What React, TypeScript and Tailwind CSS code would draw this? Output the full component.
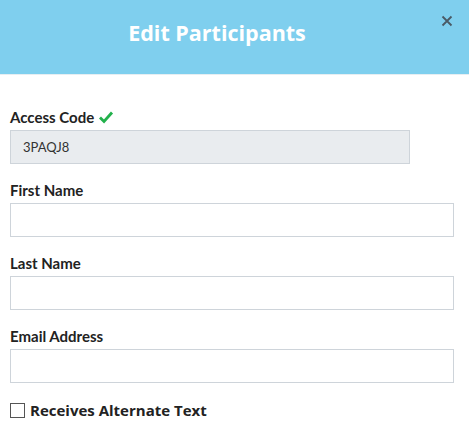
import React from 'react';

const Field = ({ label, value, disabled, check, narrow }: { label: string; value?: string; disabled?: boolean; check?: boolean; narrow?: boolean }) => (
  <div className="mb-[16px]">
    <label className="flex items-center h-[20px] text-[15px] font-bold text-[#222] mb-[3px]">
      {label}
      {check && (
        <svg className="ml-[4px]" width="16" height="14" viewBox="0 0 16 14">
          <path d="M2 7.5 L6 11.5 L14 2.5" fill="none" stroke="#22b14c" strokeWidth="2.8" />
        </svg>
      )}
    </label>
    <input
      readOnly
      value={value ?? ''}
      disabled={disabled}
      className={`block h-[34px] px-[12px] text-[13px] text-[#333] border border-[#ced4da] ${narrow ? 'w-[400px]' : 'w-[444px]'} ${disabled ? 'bg-[#e9ecef]' : 'bg-white'}`}
    />
  </div>
);

export default function App() {
  return (
    <div className="w-[469px] h-[432px] bg-white overflow-hidden" style={{ fontFamily: 'Lato, "Noto Sans", sans-serif' }}>
      <div className="relative h-[75px] bg-[#7fcfee] border-b border-[#e6eef2] flex justify-center pr-[35px] pt-[19px]">
        <h2 className="text-[21.5px] font-bold text-white leading-[28px]" style={{ fontFamily: '"Open Sans", sans-serif' }}>Edit Participants</h2>
        <button className="absolute right-[16px] top-[15px] text-[#4a5a66]">
          <svg width="12" height="12" viewBox="0 0 12 12">
            <path d="M1.5 1.5 L10.5 10.5 M10.5 1.5 L1.5 10.5" stroke="#4a5a66" strokeWidth="1.8" />
          </svg>
        </button>
      </div>
      <div className="px-[10px] pt-[32px]">
        <Field label="Access Code" value="3PAQJ8" disabled check narrow />
        <Field label="First Name" />
        <Field label="Last Name" />
        <Field label="Email Address" />
        <label className="flex items-center gap-[5px] text-[15px] font-bold text-[#222] mt-[5px]" style={{ fontFamily: '"Open Sans", sans-serif' }}>
          <span className="w-[15px] h-[15px] border border-[#555] bg-white" />
          Receives Alternate Text
        </label>
      </div>
    </div>
  );
}
